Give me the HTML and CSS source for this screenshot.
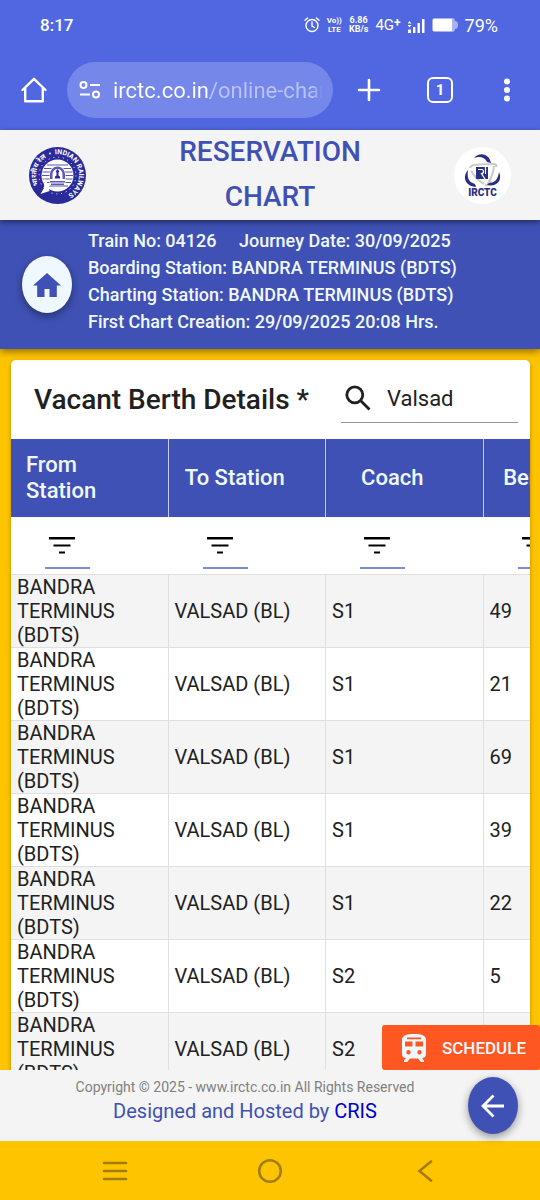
FILE: index.html
```html
<!DOCTYPE html>
<html lang="en">
<head>
    <meta charset="UTF-8">
    <meta name="viewport" content="width=device-width, initial-scale=1.0">
    <title>Reservation Chart</title>
    <link rel="stylesheet" href="styles.css">
</head>
<body>
    <div class="browser">
        <div class="status-bar">
            <span class="clock">8:17</span>
            <div class="status-icons">
                <svg class="alarm" width="16" height="16" viewBox="0 0 16 16" fill="none" stroke="currentColor" stroke-width="1.4" stroke-linecap="round">
                    <circle cx="8" cy="8.5" r="6"/>
                    <path d="M8 5v4l2.5 1.5M1 3.2L3.6 1M15 3.2L12.4 1"/>
                </svg>
                <span class="tiny volte">Vo))<br>LTE</span>
                <span class="tiny speed">6.86<br>KB/s</span>
                <span class="network">4G<sup>+</sup></span>
                <svg class="signal" width="17" height="15" viewBox="0 0 17 15" fill="currentColor">
                    <path d="M0 11.5h3V15H0zM5 9h2.4v6H5zM9.500 5h2.400v10H9.500zM14 1h2.500v14H14zM1.500 3l2 2.500h-4zM1.500 9.500l2-2.500h-4z"/>
                </svg>
                <svg class="battery" width="26" height="14" viewBox="0 0 26 14">
                    <path d="M3 0h17q3 0 3 3 3 0 3 4t-3 4q0 3-3 3H3q-3 0-3-3V3q0-3 3-3z" fill="#a9b3f1"/>
                    <path d="M2 1h18v12H2q-1 0-1-1V2q0-1 1-1z" fill="#fff"/>
                </svg>
                <span class="percent">79%</span>
            </div>
        </div>
        <div class="toolbar">
            <button type="button" class="icon-btn" aria-label="Home">
                <svg width="26" height="26" viewBox="0 0 26 26" fill="none" stroke="currentColor" stroke-width="2.400" stroke-linejoin="round" stroke-linecap="round">
                    <path d="M1.500 13L13 1.800 24.500 13M4.200 11.500v12.700h17.600V11.500"/>
                </svg>
            </button>
            <div class="omnibox">
                <svg width="22" height="18" viewBox="0 0 22 18" fill="none" stroke="currentColor" stroke-width="2">
                    <circle cx="4.500" cy="4" r="3"/>
                    <path d="M11 4h10M1 13.500h10"/>
                    <circle cx="17" cy="13.500" r="3"/>
                </svg>
                <input type="text" class="url" aria-label="Address" value="irctc.co.in/online-charts">
            </div>
            <button type="button" class="icon-btn new-tab" aria-label="New tab">
                <svg width="24" height="24" viewBox="0 0 24 24" stroke="currentColor" stroke-width="2.600" stroke-linecap="round">
                    <path d="M12 2v20M2 12h20"/>
                </svg>
            </button>
            <button type="button" class="tab-count" aria-label="Open tabs">1</button>
            <button type="button" class="icon-btn" aria-label="More">
                <svg width="6" height="24" viewBox="0 0 6 24" fill="currentColor">
                    <circle cx="3" cy="3.500" r="3"/>
                    <circle cx="3" cy="12" r="3"/>
                    <circle cx="3" cy="20.500" r="3"/>
                </svg>
            </button>
        </div>
    </div>

    <header class="page-header">
        <svg class="logo" viewBox="0 0 57 57" role="img" aria-label="Indian Railways">
            <defs>
                <path id="ring-right" d="M26 7.200a21.300 21.300 0 0 1 5 42.600"/>
                <path id="ring-left" d="M9.500 38A21.300 21.300 0 0 1 28.500 7.200"/>
            </defs>
            <circle cx="28.500" cy="28.500" r="28.500" fill="#2a2a9a"/>
            <circle cx="28.500" cy="28.500" r="16" fill="#fff"/>
            <circle cx="28.500" cy="28.500" r="18.400" fill="none" stroke="#fff" stroke-width="1" stroke-dasharray="1 3.820"/>
            <path d="M18 18h21M15 21.500h27M13.500 25h30M13 28.500h31M13.500 32h30M15 35.500h27M18 39h21" stroke="#2a2a9a" stroke-width=".8"/>
            <path d="M20.500 38V27a8 8 0 0 1 16 0v11z" fill="#fff"/>
            <path d="M21 32v-5a7.500 7.500 0 0 1 15 0v5h-2.500v-5a5 5 0 0 0-10 0v5z" fill="#5b5bb5"/>
            <path d="M28.500 22l1.800 2.500-.8 1v3l1.500 1v2h-5v-2l1.500-1v-3l-.8-1z" fill="#2a2a9a"/>
            <path d="M21 34h15v1.500H21zM22 36.500h13V38H22z" fill="#5b5bb5"/>
            <path d="M15.500 31l3.500 6 2 1-1.500 2 1 4-9 3 3.500-6z" fill="#fff"/>
            <circle cx="21" cy="6.500" r=".9" fill="#fff"/>
            <text class="ring-text"><textPath href="#ring-right">INDIAN RAILWAYS</textPath></text>
            <text class="ring-text"><textPath href="#ring-left">भारतीय रेल</textPath></text>
        </svg>
        <h1>RESERVATION CHART</h1>
        <svg class="logo" viewBox="0 0 57 57" role="img" aria-label="IRCTC">
            <circle cx="28.500" cy="28.500" r="28.500" fill="#fff"/>
            <path d="M16 21q1-3 5-3M19 18q10-1 21-1 3 0 2 3M40 19q-1 9-6 18M37 34q-3 5-6 4M30 37q-8-5-13-13" fill="none" stroke="#cbcbcb" stroke-width="2.200"/>
            <path d="M20 11c5-6 15-5 17 5l-4-1c-2-5-8-6-13-4z" fill="#2b2f83"/>
            <path d="M14 23c-6 7-3 16 8 17l-1-3c-7-2-8-7-7-14z" fill="#2b2f83"/>
            <path d="M45 25c4 9-3 15-12 13l2-2c6 0 9-4 10-11z" fill="#2b2f83"/>
            <path d="M22 20h12v12H22z" fill="#2b2f83"/>
            <path d="M24 22.500h3.500q2 0 2 2t-2 2l3.500 5.500M31.500 20v7" fill="none" stroke="#fff" stroke-width="1.200"/>
            <text class="irctc-text" x="28.500" y="49">IRCTC</text>
        </svg>
    </header>

    <section class="train-info">
        <button type="button" class="round-btn home-btn" aria-label="Home">
            <svg width="28" height="24" viewBox="0 0 28 24" fill="currentColor">
                <path d="M14 0l14 12.500h-4.200V24h-7.300v-8h-5v8H4.200V12.500H0z"/>
            </svg>
        </button>
        <div class="train-lines">
            <p><span>Train No: 04126</span> <span class="journey">Journey Date: 30/09/2025</span></p>
            <p>Boarding Station: BANDRA TERMINUS (BDTS)</p>
            <p>Charting Station: BANDRA TERMINUS (BDTS)</p>
            <p>First Chart Creation: 29/09/2025 20:08 Hrs.</p>
        </div>
    </section>

    <main class="content">
        <div class="card">
            <div class="card-head">
                <h2>Vacant Berth Details *</h2>
                <label class="search">
                    <svg width="26" height="26" viewBox="0 0 26 26" fill="none" stroke="currentColor" stroke-width="2.800">
                        <circle cx="9.800" cy="9.800" r="8"/>
                        <path d="M15.500 15.500l9 9"/>
                    </svg>
                    <input type="text" aria-label="Search" value="Valsad">
                </label>
            </div>
            <table class="berths">
                <thead>
                    <tr class="titles">
                        <th><div>From Station</div></th>
                        <th><div>To Station</div></th>
                        <th><div>Coach</div></th>
                        <th><div>Berth No.</div></th>
                    </tr>
                    <tr class="filters">
                        <td><button type="button" aria-label="Filter From Station"><svg width="26" height="18" viewBox="0 0 26 18"><path d="M0 0h26v2.500H0zM4.500 7.500h17v2h-17zM10 14.500h6v2h-6z"/></svg></button></td>
                        <td><button type="button" aria-label="Filter To Station"><svg width="26" height="18" viewBox="0 0 26 18"><path d="M0 0h26v2.500H0zM4.500 7.500h17v2h-17zM10 14.500h6v2h-6z"/></svg></button></td>
                        <td><button type="button" aria-label="Filter Coach"><svg width="26" height="18" viewBox="0 0 26 18"><path d="M0 0h26v2.500H0zM4.500 7.500h17v2h-17zM10 14.500h6v2h-6z"/></svg></button></td>
                        <td><button type="button" aria-label="Filter Berth No."><svg width="26" height="18" viewBox="0 0 26 18"><path d="M0 0h26v2.500H0zM4.500 7.500h17v2h-17zM10 14.500h6v2h-6z"/></svg></button></td>
                    </tr>
                </thead>
                <tbody>
                    <tr><td>BANDRA TERMINUS (BDTS)</td><td>VALSAD (BL)</td><td>S1</td><td>49</td></tr>
                    <tr><td>BANDRA TERMINUS (BDTS)</td><td>VALSAD (BL)</td><td>S1</td><td>21</td></tr>
                    <tr><td>BANDRA TERMINUS (BDTS)</td><td>VALSAD (BL)</td><td>S1</td><td>69</td></tr>
                    <tr><td>BANDRA TERMINUS (BDTS)</td><td>VALSAD (BL)</td><td>S1</td><td>39</td></tr>
                    <tr><td>BANDRA TERMINUS (BDTS)</td><td>VALSAD (BL)</td><td>S1</td><td>22</td></tr>
                    <tr><td>BANDRA TERMINUS (BDTS)</td><td>VALSAD (BL)</td><td>S2</td><td>5</td></tr>
                    <tr><td>BANDRA TERMINUS (BDTS)</td><td>VALSAD (BL)</td><td>S2</td><td></td></tr>
                </tbody>
            </table>
        </div>
        <button type="button" class="schedule">
            <svg width="24" height="28" viewBox="0 0 24 28" fill="currentColor">
                <path fill-rule="evenodd" d="M12 0c7 0 12 1 12 6v14c0 2.500-1.500 4-4 4l2 2.500V28h-3l-3-3.500H8L5 28H2v-1.500L4 24c-2.500 0-4-1.500-4-4V6c0-5 5-6 12-6zM5 3.500v1.700h14V3.500zM3 7.500v5h7.500v-5zM13.500 7.500v5H21v-5zM6.500 16a2.200 2.200 0 1 0 0 4.400 2.200 2.200 0 0 0 0-4.400zM17.500 16a2.200 2.200 0 1 0 0 4.400 2.200 2.200 0 0 0 0-4.400z"/>
            </svg>
            SCHEDULE
        </button>
    </main>

    <footer class="page-footer">
        <div class="credits">
            <p class="copyright">Copyright © 2025 - www.irctc.co.in All Rights Reserved</p>
            <p class="hosted">Designed and Hosted by <a href="#">CRIS</a></p>
        </div>
        <button type="button" class="round-btn back-btn" aria-label="Back">
            <svg width="24" height="24" viewBox="0 0 24 24" fill="none" stroke="currentColor" stroke-width="2.800">
                <path d="M23 12H2.500M12.500 1.500L2 12l10.500 10.500"/>
            </svg>
        </button>
    </footer>

    <nav class="system-nav">
        <button type="button" aria-label="Recent apps">
            <svg width="26" height="20" viewBox="0 0 26 20"><path d="M2 2h22M2 10h22M2 18h22"/></svg>
        </button>
        <button type="button" aria-label="Home screen">
            <svg width="26" height="26" viewBox="0 0 26 26"><circle cx="13" cy="13" r="10.800"/></svg>
        </button>
        <button type="button" aria-label="Go back">
            <svg width="16" height="22" viewBox="0 0 16 22"><path d="M14 1.500L2.500 11 14 20.500"/></svg>
        </button>
    </nav>
</body>
</html>
```
FILE: styles.css
```css
* {
    box-sizing: border-box;
}
body {
    margin: 0;
    height: 100vh;
    display: flex;
    flex-direction: column;
    font-family: Roboto, "Liberation Sans", sans-serif;
    background-color: #ffc400;
    color: #212121;
    overflow: hidden;
}
h1, h2, p {
    margin: 0;
    font-weight: 500;
}
button, input {
    font-family: inherit;
    border: none;
    background: none;
    padding: 0;
    color: inherit;
}
button {
    cursor: pointer;
}
svg {
    display: block;
    flex: none;
}

/* browser bars */
.browser {
    background-color: #5067e1;
    color: #fff;
}
.status-bar {
    height: 50px;
    padding: 0 42px 0 40px;
    display: flex;
    align-items: center;
    justify-content: space-between;
}
.clock {
    font-size: 17px;
    font-weight: 500;
}
.status-icons {
    display: flex;
    align-items: center;
    gap: 7px;
}
.tiny {
    font-size: 9px;
    line-height: 9px;
    font-weight: 700;
    text-align: center;
}
.volte {
    font-size: 8px;
}
.network {
    font-size: 15px;
    line-height: 16px;
    white-space: nowrap;
}
.network sup {
    font-size: 12px;
    line-height: 0;
    font-weight: 700;
    vertical-align: 3px;
}
.percent {
    font-size: 18px;
}
.toolbar {
    height: 80px;
    padding: 0 30px 0 21px;
    display: flex;
    align-items: center;
}
.icon-btn {
    flex: none;
}
.omnibox {
    flex: 1;
    min-width: 0;
    height: 56px;
    margin: 0 24px 0 20px;
    padding: 0 10px 0 12px;
    display: flex;
    align-items: center;
    gap: 12px;
    border-radius: 28px;
    background-color: #7587e9;
}
.url {
    flex: 1;
    min-width: 0;
    height: 30px;
    font-size: 22px;
    color: transparent;
    background: linear-gradient(to right, #fff 97px, #b9c3f6 97px);
    background-clip: text;
    -webkit-background-clip: text;
    mask-image: linear-gradient(to right, #000 95%, transparent);
}
.tab-count {
    width: 26px;
    height: 26px;
    margin: 0 51px 0 46px;
    border: 2px solid #fff;
    border-radius: 6px;
    font-size: 15px;
    line-height: 22px;
    font-weight: 700;
}

/* page header */
.page-header {
    position: relative;
    z-index: 2;
    flex: none;
    height: 90px;
    padding: 0 29px;
    display: flex;
    align-items: center;
    justify-content: space-between;
    background-color: #f4f4f4;
    box-shadow: 0 2px 6px rgba(0, 0, 0, 0.5);
}
.page-header h1 {
    flex: 1;
    padding: 0 80px 2px;
    font-size: 28px;
    line-height: 45px;
    text-align: center;
    color: #3f51b5;
}
.logo {
    width: 57px;
    height: 57px;
}
.ring-text {
    font-family: Roboto, "Noto Sans", sans-serif;
    font-size: 7px;
    font-weight: 700;
    fill: #fff;
}
.irctc-text {
    font-size: 10px;
    font-weight: 900;
    text-anchor: middle;
    fill: #2b2f83;
}
.train-info {
    position: relative;
    z-index: 1;
    flex: none;
    padding: 0 22px;
    display: flex;
    align-items: center;
    gap: 16px;
    background-color: #3f51b5;
    color: #f0f8ff;
    box-shadow: 0 2px 8px rgba(0, 0, 0, 0.5);
}
.train-lines {
    padding: 7px 0 14px;
    font-size: 18px;
    line-height: 27px;
    white-space: nowrap;
}
.journey {
    margin-left: 18px;
}
.round-btn {
    flex: none;
    width: 50px;
    height: 57px;
    display: flex;
    align-items: center;
    justify-content: center;
    border-radius: 50%;
    box-shadow: 0 3px 8px rgba(0, 0, 0, 0.4);
}
.home-btn {
    background-color: #f0f8ff;
    color: #3f51b5;
}

/* berth list */
.content {
    position: relative;
    flex: 1;
    min-height: 0;
    padding: 11px 10px 0 11px;
    overflow: hidden;
}
.card {
    overflow: hidden;
    border-radius: 5px;
    background-color: #fff;
    box-shadow: 0 2px 4px rgba(0, 0, 0, 0.3);
}
.card-head {
    height: 79px;
    padding: 0 12px 0 23px;
    display: flex;
    align-items: center;
    gap: 32px;
}
.card-head h2 {
    font-size: 28px;
    white-space: nowrap;
}
.search {
    flex: 1;
    min-width: 0;
    height: 46px;
    padding: 0 0 2px 4px;
    display: flex;
    align-items: center;
    gap: 16px;
    border-bottom: 1px solid #949494;
}
.search input {
    width: 100%;
    min-width: 0;
    font-size: 22px;
}
.berths {
    width: 630px;
    table-layout: fixed;
    border-collapse: separate;
    border-spacing: 0;
    font-size: 20px;
    line-height: 24px;
}
.titles th {
    height: 78px;
    padding: 0 39px 0 15px;
    border-right: 1px solid #c5cbe9;
    background-color: #3f51b5;
    color: #f0f8ff;
    font-size: 22px;
    line-height: 26px;
    font-weight: 500;
    text-align: left;
}
.titles div {
    display: flex;
    justify-content: center;
}
.filters td {
    height: 57px;
    padding: 0 0 5px 34px;
    vertical-align: bottom;
}
.filters button {
    width: 45px;
    height: 36px;
    padding: 0 0 8px 4px;
    display: block;
    border-bottom: 2px solid #7c8bd8;
}
.berths tbody td {
    height: 73px;
    padding: 0 30px 0 6px;
    border-top: 1px solid #e0e0e0;
    border-right: 1px solid #e0e0e0;
}
.berths tbody td:nth-child(2) {
    padding-right: 0;
}
.berths tbody tr:nth-child(odd) {
    background-color: #f4f4f4;
}
.schedule {
    position: absolute;
    right: 0;
    bottom: 0;
    height: 45px;
    padding: 0 14px 0 20px;
    display: flex;
    align-items: center;
    gap: 16px;
    border-radius: 3px;
    background-color: #ff5722;
    color: #f0f8ff;
    font-size: 17px;
    font-weight: 500;
}

/* footer */
.page-footer {
    flex: none;
    height: 71px;
    padding: 0 22px;
    display: flex;
    align-items: center;
    background-color: #f4f4f4;
}
.credits {
    flex: 1;
    padding-bottom: 11px;
    text-align: center;
}
.credits p {
    font-weight: 400;
}
.copyright {
    font-size: 14px;
    line-height: 22px;
    color: #808080;
}
.hosted {
    font-size: 20px;
    line-height: 26px;
    color: #3f51b5;
}
.hosted a {
    color: #0000cd;
    text-decoration: none;
}
.back-btn {
    background-color: #3f51b5;
    color: #fff;
}
.system-nav {
    flex: none;
    height: 59px;
    padding: 0 37px;
    display: grid;
    grid-template-columns: repeat(3, 1fr);
}
.system-nav button {
    display: flex;
    align-items: center;
    justify-content: center;
}
.system-nav svg {
    fill: none;
    stroke: #a37d0a;
    stroke-width: 2.6px;
    stroke-linecap: round;
}
```
